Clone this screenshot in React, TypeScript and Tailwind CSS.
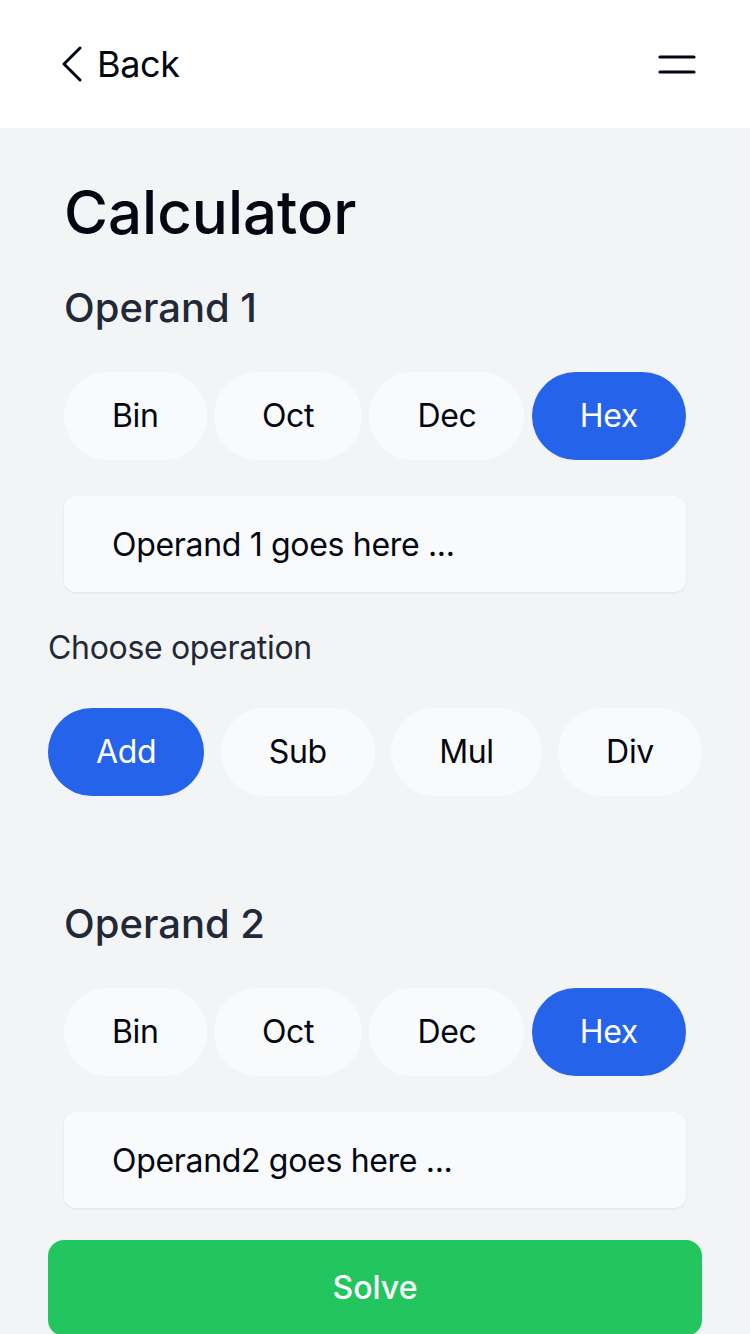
import { useState } from 'react';

const bases = ['Bin', 'Oct', 'Dec', 'Hex'];
const ops = ['Add', 'Sub', 'Mul', 'Div'];

function Pill({ label, active, onClick }: { label: string; active: boolean; onClick: () => void }) {
  return (
    <button
      onClick={onClick}
      className={
        'h-[88px] px-12 rounded-full text-[32px] leading-none tracking-[-0.01em] ' +
        (active ? 'bg-[#2563eb] text-white' : 'bg-[#f9fafb] text-[#030712]')
      }
    >
      {label}
    </button>
  );
}

function OperandBlock({ title, placeholder }: { title: string; placeholder: string }) {
  const [base, setBase] = useState('Hex');
  return (
    <div className="px-4">
      <h2 className="text-[40px] leading-[48px] font-medium text-[#1f2937]">{title}</h2>
      <div className="mt-10 flex justify-between">
        {bases.map(b => (
          <Pill key={b} label={b} active={b === base} onClick={() => setBase(b)} />
        ))}
      </div>
      <input
        className="mt-9 w-full h-24 rounded-xl bg-[#f9fafb] shadow-[0_1px_3px_rgba(0,0,0,0.08)] px-12 text-[32px] tracking-[-0.01em] text-[#030712] placeholder:text-[#030712] outline-none"
        placeholder={placeholder}
      />
    </div>
  );
}

export default function App() {
  const [op, setOp] = useState('Add');

  return (
    <div className="min-h-[1334px] bg-[#f3f4f6] font-['Inter',_'Noto_Sans',_sans-serif]">
      {/* top bar */}
      <div className="h-32 bg-white flex items-center justify-between pl-[60px] pr-[54px]">
        <button className="flex items-center gap-[15px] text-[36px] leading-none tracking-[-0.01em] text-[#030712]">
          <svg width="22" height="36" viewBox="0 0 22 36" fill="none">
            <path d="M20 2 L4 18 L20 34" stroke="#030712" strokeWidth="3" strokeLinecap="round" strokeLinejoin="round" />
          </svg>
          Back
        </button>
        <svg width="38" height="20" viewBox="0 0 38 20" fill="none">
          <path d="M2 3 H36 M2 18 H36" stroke="#030712" strokeWidth="3.2" strokeLinecap="round" />
        </svg>
      </div>

      <div className="px-12 pt-12">
        <h1 className="px-4 text-[60px] leading-[72px] font-medium text-[#030712]">Calculator</h1>

        <div className="mt-9">
          <OperandBlock title="Operand 1" placeholder="Operand 1 goes here ..." />
        </div>

        <p className="mt-9 text-[32px] leading-[40px] tracking-[-0.01em] text-[#1f2937]">Choose operation</p>
        <div className="mt-10 flex justify-between">
          {ops.map(o => (
            <Pill key={o} label={o} active={o === op} onClick={() => setOp(o)} />
          ))}
        </div>

        <div className="mt-[104px]">
          <OperandBlock title="Operand 2" placeholder="Operand2 goes here ..." />
        </div>

        <button className="mt-8 w-full h-24 rounded-2xl bg-[#22c55e] text-white text-[32px] font-medium">
          Solve
        </button>
      </div>
    </div>
  );
}
